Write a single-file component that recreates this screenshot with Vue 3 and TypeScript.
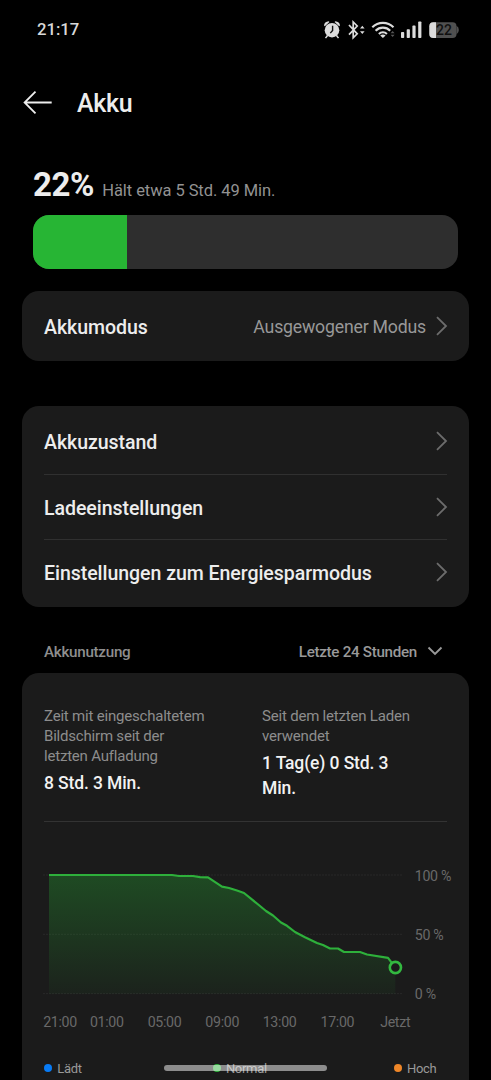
<script setup lang="ts">
interface Point { x: number; y: number }

const level = 22

const settings: string[] = ['Akkuzustand', 'Ladeeinstellungen', 'Einstellungen zum Energiesparmodus']

const curve: Point[] = [
  [49, 25], [172, 25], [179, 26], [193, 26], [200, 27.2], [208, 27.4], [222, 36.6], [229, 38], [237, 40.5], [244, 43],
  [260, 56], [266, 61], [273, 65.5], [281, 72.5], [287, 75.8], [295, 82], [305, 87.2], [317, 93], [323, 95],
  [330, 98.5], [338, 98.5], [344, 102], [360, 102], [367, 104.5], [388, 107.8], [395.3, 117.3],
].map(([x, y]) => ({ x, y }))

const line = curve.map((p, i) => `${i ? 'L' : 'M'}${p.x} ${p.y}`).join(' ')
const area = `${line} L395.3 143.7 L49 143.7 Z`

const levels = [
  { label: '100 %', y: 25 },
  { label: '50 %', y: 84.3 },
  { label: '0 %', y: 143.7 },
]

const hours = [
  { label: '21:00', x: 60 },
  { label: '01:00', x: 106.8 },
  { label: '05:00', x: 164.5 },
  { label: '09:00', x: 222.2 },
  { label: '13:00', x: 279.6 },
  { label: '17:00', x: 337.4 },
  { label: 'Jetzt', x: 395.2 },
]

const legend = [
  { label: 'Lädt', tone: 'blue' },
  { label: 'Normal', tone: 'green' },
  { label: 'Hoch', tone: 'orange' },
]
</script>

<template>
  <div class="screen">
    <header class="status">
      <span class="clock">21:17</span>
      <svg class="tray" width="140" height="24" viewBox="320 18 140 24">
        <g fill="#dcdcdc">
          <circle cx="332" cy="30.2" r="7.3" />
          <path d="M327.5 35.5l-2 2.6M336.5 35.5l2 2.6" stroke="#dcdcdc" stroke-width="1.5" />
          <path d="M324 25.6q.4-3.9 4.7-4.3l.7.8-4.6 4.2zM340 25.6q-.4-3.9-4.7-4.3l-.7.8 4.6 4.2z" />
        </g>
        <path d="M332.6 25.8v4.7l-2.3 2.6" fill="none" stroke="#111" stroke-width="1.4" />
        <path d="M349 25l8.2 8.8-4 4V22l4 4-8.2 8.6" fill="none" stroke="#dcdcdc" stroke-width="1.7" />
        <path d="M360 28.6l2.3-2.8 2.3 2.8zM360 31.2l2.3 2.8 2.3-2.8z" fill="#dcdcdc" />
        <g fill="none" stroke="#dcdcdc" stroke-width="2.1">
          <path d="M372.3 27.3a15 15 0 0 1 21.2 0" />
          <path d="M375.6 30.7a10.3 10.3 0 0 1 14.6 0" />
          <path d="M378.9 34a5.6 5.6 0 0 1 8 0" />
        </g>
        <path d="M380.2 35.4q2.7-1.8 5.4 0l-2.7 2.5z" fill="#dcdcdc" />
        <path d="M390.6 33.2l2-2.2 2 2.2zM390.6 34.8l2 2.2 2-2.2z" fill="#555" />
        <g fill="#dcdcdc">
          <rect x="401" y="32" width="3.2" height="6" rx=".8" />
          <rect x="406.7" y="29.3" width="3.2" height="8.7" rx=".8" />
          <rect x="412.4" y="25.6" width="3.2" height="12.4" rx=".8" />
          <rect x="418.2" y="21.4" width="3.2" height="16.6" rx=".8" />
        </g>
        <rect x="429.3" y="22.3" width="27.2" height="15.7" rx="4" fill="#505050" />
        <path d="M436 22.3h-2.7a4 4 0 0 0-4 4v7.7a4 4 0 0 0 4 4h2.7z" fill="#dcdcdc" />
        <path d="M456.5 25.8q2.4 1.5 2.4 4.3t-2.4 4.3z" fill="#505050" />
        <text x="444" y="35.2" class="tray-level">22</text>
      </svg>
    </header>

    <div class="title-bar">
      <svg width="30" height="26" viewBox="0 0 30 26">
        <path d="M28.7 12.5H2M12.5 1.7L1.6 12.5l10.9 10.9" fill="none" stroke="#eee" stroke-width="1.8" />
      </svg>
      <h1>Akku</h1>
    </div>

    <section class="summary">
      <span class="percent">{{ level }}%</span>
      <span class="remaining">Hält etwa 5 Std. 49 Min.</span>
    </section>
    <div class="meter"><div class="meter-fill" :style="{ width: level + '%' }"></div></div>

    <div class="card mode">
      <span class="row-label">Akkumodus</span>
      <span class="mode-value">Ausgewogener Modus</span>
      <svg class="chevron" width="12" height="20" viewBox="0 0 12 20"><path d="M1 1.2l9 8.8-9 8.8" /></svg>
    </div>

    <nav class="card settings">
      <div v-for="item in settings" :key="item" class="row">
        <span class="row-label">{{ item }}</span>
        <svg class="chevron" width="12" height="20" viewBox="0 0 12 20"><path d="M1 1.2l9 8.8-9 8.8" /></svg>
      </div>
    </nav>

    <div class="usage-head">
      <span class="usage-title">Akkunutzung</span>
      <span class="period">Letzte 24 Stunden</span>
      <svg class="expand" width="16" height="12" viewBox="0 0 16 12">
        <path d="M1.5 2.5L8 9l6.5-6.5" fill="none" stroke="#999" stroke-width="1.9" />
      </svg>
    </div>

    <section class="card usage">
      <div class="stats">
        <div class="stat">
          <p>Zeit mit eingeschaltetem<br>Bildschirm seit der<br>letzten Aufladung</p>
          <strong>8 Std. 3 Min.</strong>
        </div>
        <div class="stat">
          <p>Seit dem letzten Laden<br>verwendet</p>
          <strong>1 Tag(e) 0 Std. 3<br>Min.</strong>
        </div>
      </div>
      <svg class="chart" width="447" height="190" viewBox="22 0 447 190">
        <defs>
          <linearGradient id="fade" x1="0" y1="25" x2="0" y2="143.7" gradientUnits="userSpaceOnUse">
            <stop offset="0" stop-color="#27b535" stop-opacity=".31" />
            <stop offset="1" stop-color="#27b535" stop-opacity=".05" />
          </linearGradient>
        </defs>
        <g v-for="l in levels" :key="l.label">
          <path :d="`M43 ${l.y}H403`" class="gridline" />
          <text x="414.8" :y="l.y + 5.7" class="axis">{{ l.label }}</text>
        </g>
        <path :d="area" fill="url(#fade)" />
        <path :d="line" fill="none" stroke="#2eb03b" stroke-width="2.2" stroke-linejoin="round" />
        <circle cx="395.4" cy="117.5" r="5.6" fill="#1b1b1b" stroke="#33b840" stroke-width="2.6" />
        <text v-for="h in hours" :key="h.label" :x="h.x" y="177" class="axis" text-anchor="middle">{{ h.label }}</text>
      </svg>
      <div class="legend">
        <span v-for="entry in legend" :key="entry.label" class="legend-item">
          <i class="dot" :class="entry.tone"></i><span class="legend-label">{{ entry.label }}</span>
        </span>
      </div>
    </section>

    <div class="home-bar"></div>
  </div>
</template>

<style>
html, body { background: #000; }
</style>

<style scoped>
.screen {
  position: relative;
  box-sizing: border-box;
  width: 491px;
  height: 1080px;
  padding: 0 22px;
  overflow: hidden;
  background: #000;
  color: #ededed;
  font-family: Roboto, "Liberation Sans", sans-serif;
}
.status { display: flex; align-items: center; justify-content: space-between; height: 60px; padding: 0 9px 0 15px; }
.clock { margin-top: -2px; font-size: 16.7px; font-weight: 500; color: #d8d8d8; }
.tray-level { font-size: 14px; font-weight: 500; fill: #101010; text-anchor: middle; }
.title-bar { display: flex; align-items: center; gap: 24px; height: 86px; padding-left: 1px; }
h1 { margin: 1px 0 0; font-size: 25px; font-weight: 500; letter-spacing: -.3px; }
.summary { display: flex; align-items: baseline; gap: 8.2px; height: 68.5px; padding: 0 11px; line-height: 78px; white-space: nowrap; }
.percent { font-size: 33px; font-weight: 700; letter-spacing: -.4px; }
.remaining { font-size: 16.5px; color: #929292; letter-spacing: -.07px; }
.meter { height: 54.5px; margin: 0 11px; border-radius: 16px; overflow: hidden; background: #2e2e2e; }
.meter-fill { height: 100%; background: #27b534; }
.card { background: #1b1b1b; border-radius: 17px; }
.mode { display: flex; align-items: center; height: 70px; margin-top: 22px; padding: 0 22px; }
.row-label { font-size: 19.55px; font-weight: 500; letter-spacing: -.05px; white-space: nowrap; padding-top: 3px; }
.mode-value { margin-left: auto; margin-right: 10px; padding-top: 2px; font-size: 17.7px; letter-spacing: -.2px; color: #989898; }
.chevron { flex: none; margin-right: -1px; fill: none; stroke: #6c6c6c; stroke-width: 1.8; }
.settings { box-sizing: border-box; margin-top: 45px; padding: 2px 22px 0; height: 201px; }
.row { display: flex; box-sizing: border-box; align-items: center; justify-content: space-between; height: 65.5px; }
.row + .row { border-top: 1px solid #303030; }
.usage-head { display: flex; align-items: center; box-sizing: border-box; height: 66px; padding: 24px 26px 0 22px; }
.usage-title { font-size: 15.2px; font-weight: 500; letter-spacing: -.28px; color: #8e8e8e; margin-right: auto; }
.period { font-size: 15.2px; font-weight: 500; letter-spacing: -.3px; color: #999; margin-right: 10px; }
.expand { margin-top: -2px; }
.usage { height: 430px; }
.stats { display: flex; margin: 0 22px; padding-top: 33px; height: 115px; border-bottom: 1px solid #333; }
.stat { width: 218px; flex: none; white-space: nowrap; }
.stat p { margin: 0; font-size: 15px; line-height: 20px; letter-spacing: -.2px; color: #8d8d8d; }
.stat strong { display: block; margin-top: 5px; font-size: 17.5px; font-weight: 500; line-height: 25px; letter-spacing: -.12px; color: #f2f2f2; }
.chart { display: block; margin-top: 28px; }
.gridline { stroke: #292929; stroke-width: 1; stroke-dasharray: 2 1; }
.axis { font-size: 14.2px; letter-spacing: -.32px; fill: #696969; }
.legend { display: flex; justify-content: space-between; margin: 17.5px 32.5px 0 22px; }
.legend-item { display: flex; align-items: center; gap: 5.2px; height: 20px; font-size: 13px; letter-spacing: -.3px; color: #999; }
.legend-item:nth-child(2) { padding-left: 4px; }
.legend-label { padding-top: 1px; }
.dot { width: 8px; height: 8px; border-radius: 50%; }
.blue { background: #087bf5; }
.green { background: #31b53e; }
.orange { background: #ee8628; }
.home-bar { position: absolute; left: 164px; top: 1065px; width: 163px; height: 6px; border-radius: 3px; background: rgba(255, 255, 255, .5); }
</style>
